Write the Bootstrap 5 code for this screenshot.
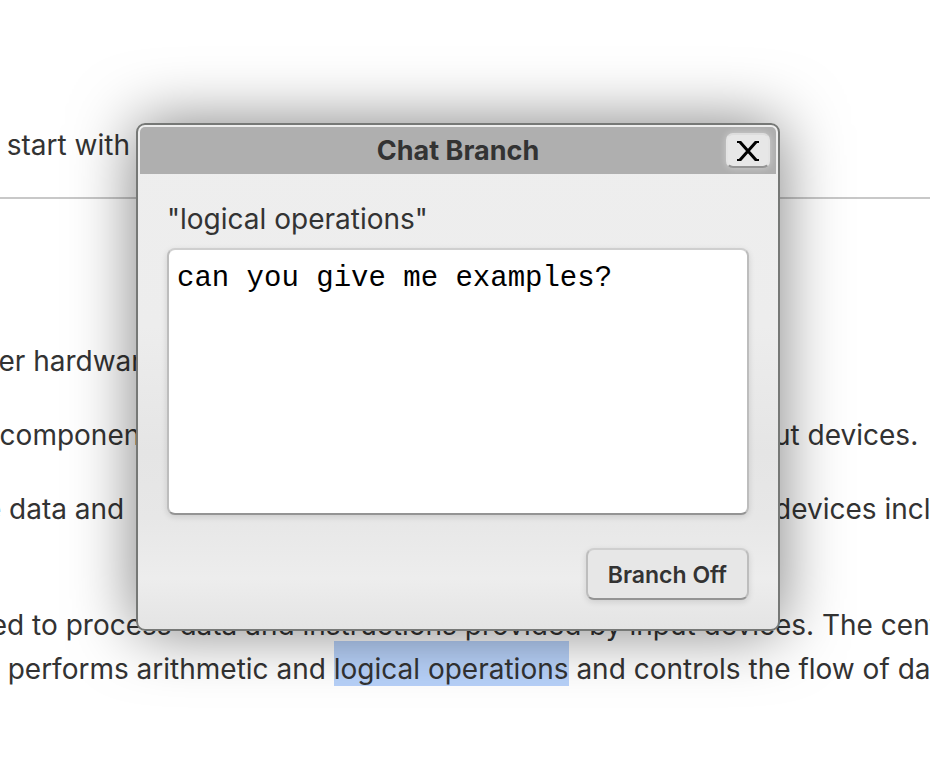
<!DOCTYPE html>
<html lang="en">
<head>
<meta charset="utf-8">
<meta name="viewport" content="width=device-width, initial-scale=1">
<title>Chat Branch</title>
<link rel="stylesheet" href="https://cdn.jsdelivr.net/npm/bootstrap@5.3.0/dist/css/bootstrap.min.css">
<style>
body { font-family: Inter, "Liberation Sans", sans-serif; color: #333; font-size: 28px; line-height: 44px; background: #fff; }
.article { padding-top: 123px; margin-left: -24px; white-space: nowrap; }
.article p { margin: 0; }
.article hr { margin: 30px 0 0; border-top: 2px solid #c8c8c8; opacity: 1; }
.section-text { padding-top: 140px; }
.section-text p { margin-bottom: 30px; }
.section-text .closing { margin-top: 72px; }
mark.picked { background: #b8d2fa; color: inherit; padding: 11px 0 0; }
.right-part { width: 156px; }
.branch-window { top: 123px; left: 136px; width: 644px; border: 2px solid #767876; border-radius: 9px; padding: 2px;
  background: linear-gradient(#eee, #ededed 40%, #e5e5e5 65%, #e7e7e7 78%, #ededed 90%, #e4e4e4);
  box-shadow: 0 0 64px rgba(0,0,0,.5); }
.title-bar { background: #afafaf; height: 47px; border-radius: 5px 5px 0 0; padding: 0 6px 0 50px; }
.title-bar h1 { font-size: 27px; line-height: 47px; font-weight: 700; }
.raised { background: #e7e7e7; border: 2px solid #bdbdbd; border-top-color: #cfcfcf; border-bottom-color: #949494; border-radius: 8px; box-shadow: 0 2px 6px rgba(0,0,0,.12); color: #333; }
.close-box { width: 44px; height: 35px; border-color: #ddd #e4e4e4 #949494; border-radius: 7px; box-shadow: 0 0 7px rgba(255,255,255,.4); }
.window-body { padding: 23px 27px 27px; }
.window-body label { margin-bottom: 7px; }
.question { height: 267px; resize: none; padding: 6px 8px; background: #fff; color: #000; font: 29px/46px "Liberation Mono", monospace; outline: 0; }
.send { margin-top: 33px; height: 52px; padding: 2px 20px 0; font-size: 23px; line-height: 30px; font-weight: 600; }
</style>
</head>
<body class="overflow-hidden">
<main class="article overflow-hidden">
  <p>s, start with</p>
  <hr>
  <div class="section-text">
    <p>wer hardware</p>
    <p class="d-flex justify-content-between"><span>y components</span><span class="right-part">ut devices.</span></p>
    <p class="d-flex justify-content-between"><span>te data and</span><span class="right-part">devices include</span></p>
    <p class="closing">sed to process data and instructions provided by input devices. The central<br>
    a, performs arithmetic and <mark class="picked">logical operations</mark> and controls the flow of data</p>
  </div>
</main>
<form class="branch-window position-absolute" role="dialog" aria-labelledby="window-title">
  <div class="title-bar d-flex align-items-center">
    <h1 id="window-title" class="flex-grow-1 text-center m-0">Chat Branch</h1>
    <button type="button" class="raised close-box d-flex align-items-center justify-content-center p-0" aria-label="Close">
      <svg width="22" height="20" viewBox="0 0 22 20" fill="none" stroke="#000" stroke-width="2"><path d="M0 1H4M18 1H22M0 19H4M18 19H22"/><path stroke-width="3" d="M3 1L19 19M19 1L3 19"/></svg>
    </button>
  </div>
  <div class="window-body d-flex flex-column">
    <label for="question">"logical operations"</label>
    <textarea id="question" class="raised question w-100" spellcheck="false">can you give me examples?</textarea>
    <button type="button" class="raised send align-self-end">Branch Off</button>
  </div>
</form>
<script src="https://cdn.jsdelivr.net/npm/bootstrap@5.3.0/dist/js/bootstrap.bundle.min.js"></script>
</body>
</html>
